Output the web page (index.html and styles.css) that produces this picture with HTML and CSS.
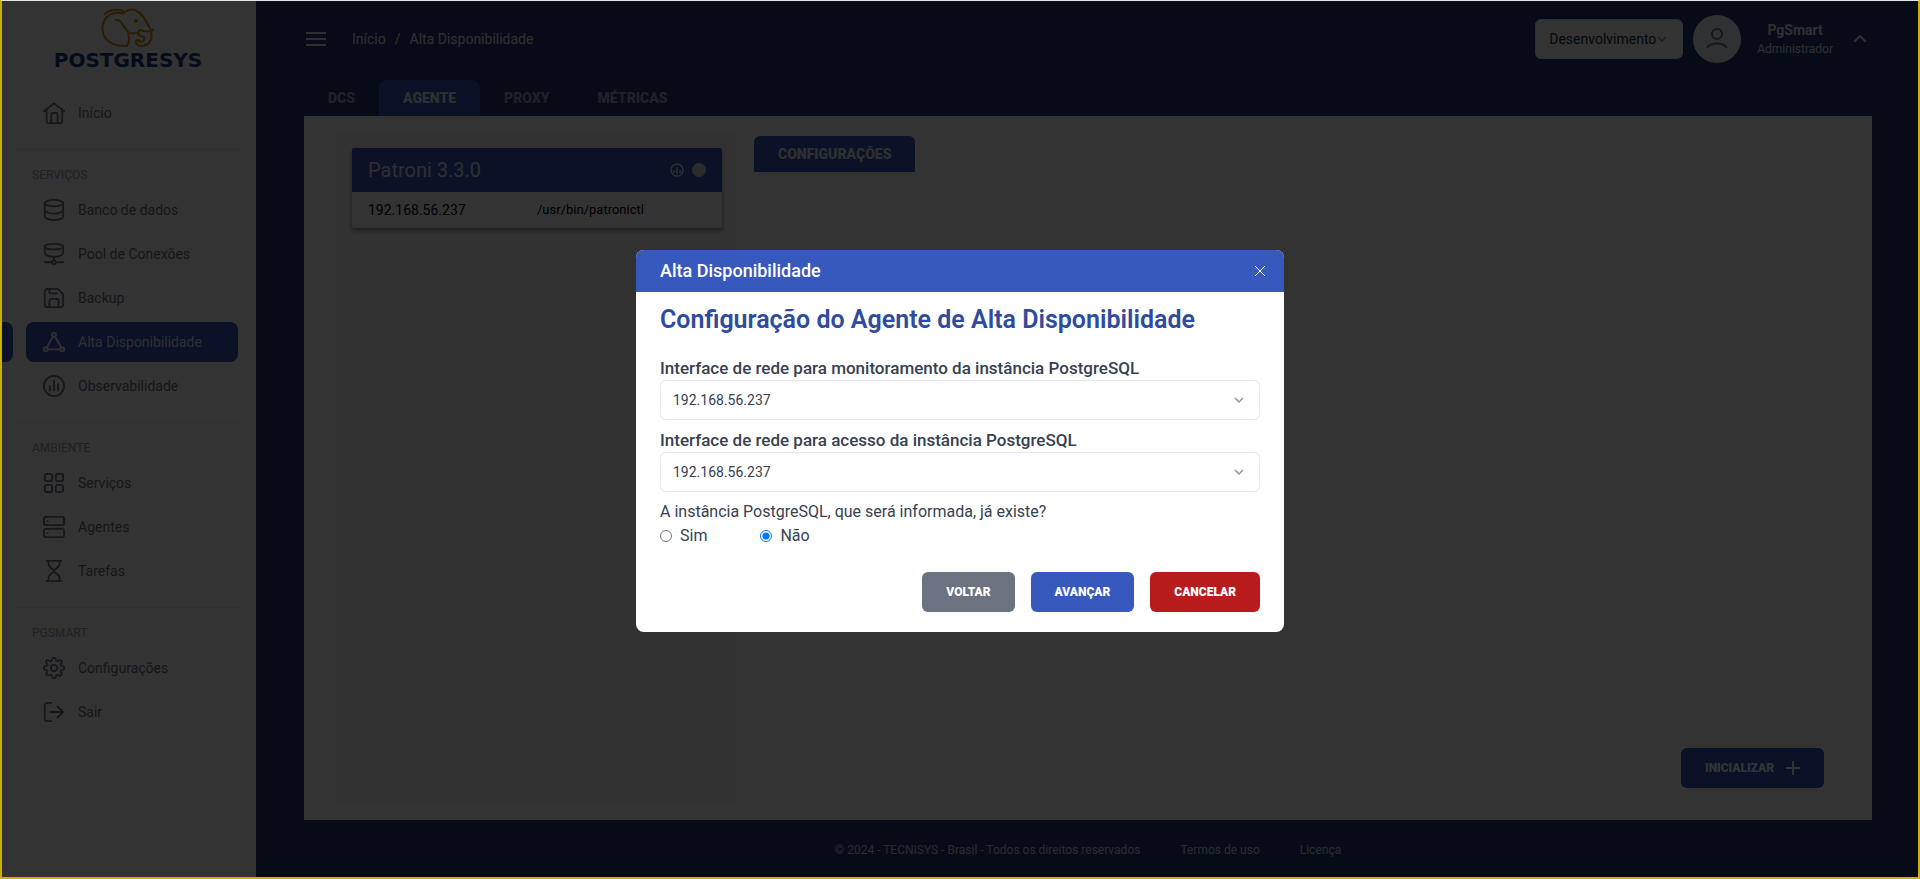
FILE: index.html
```html
<!DOCTYPE html>
<html lang="pt-BR">
<head>
    <meta charset="UTF-8">
    <meta name="viewport" content="width=device-width, initial-scale=1.0">
    <title>PgSmart - Alta Disponibilidade</title>

    <link rel="stylesheet" href="styles.css">
</head>
<body>

    <aside class="sidebar">
        <a href="#" class="logo">
            <svg class="logo-mark" viewBox="0 0 54 40">
                <path d="M3 7C8 1 15 1 23 3M27 25C29 30 28 35 26 38C15 38 7 35 3 28C-1 18 3 7 14 5C18 4 20 6 23 5C28 0 34 1 37 4C42 6 45 14 49 20C52 28 51 37 41 38C37 38 34 36 35 33C36 31 38 32 39 34C42 34 44 32 43 29C42 27 38 30 37 25M14 12C21 11 20 16 24 20C26 23 27 24 28 25C33 26 37 25 39 22C44 24 50 24 53 21" />
                <circle cx="35" cy="13" r="1" />
            </svg>
            <span class="logo-text">POSTGRESYS</span>
        </a>

        <nav class="menu">
            <a href="#" class="menu-item">
                <svg viewBox="0 0 24 24"><path d="M1 10L12 1.500L23 10M4 8V21Q4 23 6 23H19Q21 23 21 21V8M9 23V14Q9 12 11 12H14Q16 12 16 14V23" /></svg>
                Início
            </a>

            <h2 class="menu-title">SERVIÇOS</h2>
            <a href="#" class="menu-item">
                <svg viewBox="0 0 24 24"><ellipse cx="12" cy="4.500" rx="10" ry="3.500" /><path d="M2 4.500V19C2 21 6 23 12 23S22 21 22 19V4.500M2 12C2 14 6 16 12 16S22 14 22 12" /></svg>
                Banco de dados
            </a>
            <a href="#" class="menu-item">
                <svg viewBox="0 0 24 24"><ellipse cx="12" cy="4" rx="10" ry="3" /><path d="M2 4V11C2 13 6 15 12 15S22 13 22 11V4M12 15V19M2 21H10M14 21H22" /><circle cx="12" cy="21" r="2" /></svg>
                Pool de Conexões
            </a>
            <a href="#" class="menu-item">
                <svg viewBox="0 0 24 24"><path d="M5 2H16L22 8V19Q22 22 19 22H5Q2 22 2 19V5Q2 2 5 2M7 2V6Q7 7 8 7H15M7 22V15Q7 13 9 13H15Q17 13 17 15V22" /></svg>
                Backup
            </a>
            <a href="#" class="menu-item active">
                <svg viewBox="0 0 24 24"><rect x="10" y="2" width="4" height="4" rx="1" /><rect x="1" y="18" width="4" height="4" rx="1" /><rect x="19" y="18" width="4" height="4" rx="1" /><path d="M11 6L4 18M13 6L20 18M5 20H19" /></svg>
                Alta Disponibilidade
            </a>
            <a href="#" class="menu-item">
                <svg viewBox="0 0 24 24"><circle cx="12" cy="12" r="11" /><path d="M7.500 12V17M12 6.500V17M16.500 10V17" /></svg>
                Observabilidade
            </a>

            <h2 class="menu-title">AMBIENTE</h2>
            <a href="#" class="menu-item">
                <svg viewBox="0 0 24 24"><rect x="2" y="2" width="8" height="8" rx="2" /><rect x="14" y="2" width="8" height="8" rx="2" /><rect x="2" y="14" width="8" height="8" rx="2" /><rect x="14" y="14" width="8" height="8" rx="2" /></svg>
                Serviços
            </a>
            <a href="#" class="menu-item">
                <svg viewBox="0 0 24 24"><rect x="1" y="1" width="22" height="9" rx="2" /><rect x="1" y="14" width="22" height="9" rx="2" /><path d="M5 5.500H5.100M5 18.500H5.100" /></svg>
                Agentes
            </a>
            <a href="#" class="menu-item">
                <svg viewBox="0 0 24 24"><path d="M4 1H20M4 23H20M6 1V5C6 8 12 10 12 12S6 16 6 19V23M18 1V5C18 8 12 10 12 12S18 16 18 19V23" /></svg>
                Tarefas
            </a>

            <h2 class="menu-title">PGSMART</h2>
            <a href="#" class="menu-item">
                <svg viewBox="0 0 24 24"><circle cx="12" cy="12" r="3.500" /><path d="M19.400 15a1.700 1.700 0 0 0 .3 1.800l.1.100a2 2 0 1 1-2.900 2.900l-.1-.1a1.700 1.700 0 0 0-2.800 1.200V21a2 2 0 0 1-4 0v-.1a1.700 1.700 0 0 0-2.900-1.200l-.1.100a2 2 0 1 1-2.800-2.900l.1-.1A1.700 1.700 0 0 0 3.100 14H3a2 2 0 0 1 0-4h.1a1.700 1.700 0 0 0 1.200-2.900L4.200 7A2 2 0 1 1 7 4.200l.1.100A1.700 1.700 0 0 0 10 3.100V3a2 2 0 0 1 4 0v.1a1.700 1.700 0 0 0 2.900 1.200l.1-.1A2 2 0 1 1 19.800 7l-.1.100A1.700 1.700 0 0 0 20.900 10H21a2 2 0 0 1 0 4h-.1a1.700 1.700 0 0 0-1.500 1z" /></svg>
                Configurações
            </a>
            <a href="#" class="menu-item">
                <svg viewBox="0 0 24 24"><path d="M9 2H5Q2 2 2 5V19Q2 22 5 22H9M8 12H22M16 6L22 12L16 18" /></svg>
                Sair
            </a>
        </nav>
    </aside>

    <div class="page">
        <header class="topbar">
            <button type="button" class="icon-button" aria-label="Menu">
                <svg class="burger" viewBox="0 0 20 14"><path d="M0 1H20M0 7H20M0 13H20" /></svg>
            </button>
            <nav class="breadcrumb">
                <a href="#">Início</a>
                <span>/</span>
                <a href="#">Alta Disponibilidade</a>
            </nav>
            <div class="env">
                <select class="env-select" aria-label="Ambiente">
                    <option>Desenvolvimento</option>
                </select>
                <svg class="chevron" viewBox="0 0 10 6"><path d="M1 1L5 5L9 1" /></svg>
            </div>
            <div class="avatar">
                <svg viewBox="0 0 22 22"><circle cx="11" cy="6" r="5" /><path d="M1 20C5 14 17 14 21 20" /></svg>
            </div>
            <div class="user">
                <strong>PgSmart</strong>
                <span>Administrador</span>
            </div>
            <button type="button" class="icon-button" aria-label="Abrir perfil">
                <svg class="caret" viewBox="0 0 14 8"><path d="M1 7L7 1L13 7" /></svg>
            </button>
        </header>

        <nav class="tabs">
            <a href="#" class="tab">DCS</a>
            <a href="#" class="tab active">AGENTE</a>
            <a href="#" class="tab">PROXY</a>
            <a href="#" class="tab">MÉTRICAS</a>
        </nav>

        <main class="content">
            <section class="agents">
                <article class="agent-card">
                    <header>
                        <h3>Patroni 3.3.0</h3>
                        <svg class="agent-icon" viewBox="0 0 14 14"><circle cx="7" cy="7" r="6" /><path d="M4 7V10M7 4V11M10 7V10" /></svg>
                        <span class="status"></span>
                    </header>
                    <div class="agent-info">
                        <span>192.168.56.237</span>
                        <span class="agent-path">/usr/bin/patronictl</span>
                    </div>
                </article>
            </section>
            <section class="details">
                <button type="button" class="config-tab">CONFIGURAÇÕES</button>
                <button type="button" class="btn btn-primary btn-start">
                    INICIALIZAR
                    <svg viewBox="0 0 14 14"><path d="M7 0V14M0 7H14" /></svg>
                </button>
            </section>
        </main>

        <footer class="footer">
            <span>© 2024 - TECNISYS - Brasil - Todos os direitos reservados</span>
            <a href="#">Termos de uso</a>
            <a href="#">Licença</a>
        </footer>
    </div>

    <div class="overlay">
        <div class="modal" role="dialog" aria-labelledby="modal-title">
            <header class="modal-header">
                <h2 id="modal-title">Alta Disponibilidade</h2>
                <button type="button" class="icon-button" aria-label="Fechar">
                    <svg class="close" viewBox="0 0 10 10"><path d="M0 0L10 10M10 0L0 10" /></svg>
                </button>
            </header>
            <form class="modal-body">
                <h1>Configuração do Agente de Alta Disponibilidade</h1>

                <div class="field">
                    <label for="monitor-ip">Interface de rede para monitoramento da instância PostgreSQL</label>
                    <div class="select-box">
                        <select id="monitor-ip">
                            <option>192.168.56.237</option>
                        </select>
                        <svg class="chevron" viewBox="0 0 10 6"><path d="M1 1L5 5L9 1" /></svg>
                    </div>
                </div>

                <div class="field">
                    <label for="access-ip">Interface de rede para acesso da instância PostgreSQL</label>
                    <div class="select-box">
                        <select id="access-ip">
                            <option>192.168.56.237</option>
                        </select>
                        <svg class="chevron" viewBox="0 0 10 6"><path d="M1 1L5 5L9 1" /></svg>
                    </div>
                </div>

                <fieldset class="radios">
                    <legend>A instância PostgreSQL, que será informada, já existe?</legend>
                    <div class="radio-row">
                        <label for="exists-yes"><input type="radio" id="exists-yes" name="exists">Sim</label>
                        <label for="exists-no"><input type="radio" id="exists-no" name="exists" checked>Não</label>
                    </div>
                </fieldset>

                <div class="actions">
                    <button type="button" class="btn btn-back">VOLTAR</button>
                    <button type="submit" class="btn btn-primary">AVANÇAR</button>
                    <button type="button" class="btn btn-cancel">CANCELAR</button>
                </div>
            </form>
        </div>
    </div>

</body>
</html>
```
FILE: styles.css
```css
* {
    box-sizing: border-box;
    margin: 0;
    padding: 0;
}

body {
    font-family: Roboto, "Liberation Sans", sans-serif;
    font-size: 14px;
    line-height: 20px;
    color: #1e293b;
    background-color: #233876;
    display: flex;
    min-height: 100vh;
}

a {
    color: inherit;
    text-decoration: none;
}

button {
    font-family: inherit;
    cursor: pointer;
}

svg {
    fill: none;
    stroke: currentColor;
    stroke-width: 2;
    flex-shrink: 0;
}

/* Sidebar */
.sidebar {
    width: 256px;
    background-color: #fff;
    padding: 8px 16px;
    flex-shrink: 0;
}

.logo {
    display: flex;
    flex-direction: column;
    align-items: center;
    gap: 2px;
    height: 85px;
}

.logo-mark {
    width: 54px;
    height: 40px;
    color: #d98a10;
}

.logo-text {
    font-family: "DejaVu Sans", sans-serif;
    font-size: 20px;
    font-weight: bold;
    color: #1e3a8a;
}

.menu {
    display: flex;
    flex-direction: column;
    gap: 4px;
}

.menu-item {
    display: flex;
    align-items: center;
    gap: 13px;
    height: 40px;
    margin: 0 2px 0 10px;
    padding-left: 17px;
    border-radius: 8px;
    color: #6b7280;
}

.menu-item svg {
    width: 22px;
    height: 22px;
    stroke-linecap: round;
    stroke-linejoin: round;
}

.menu-item.active {
    background-color: #3758bc;
    color: #e2e8f0;
    position: relative;
}

/* Blue marker on the window edge */
.menu-item.active::before {
    content: "";
    position: absolute;
    left: -26px;
    width: 13px;
    height: 40px;
    background-color: #3758bc;
    border-radius: 0 8px 8px 0;
}

.menu-title {
    height: 37px;
    margin-top: 12px;
    padding: 15px 16px 0;
    border-top: 1px solid #e2e8f0;
    font-size: 12px;
    font-weight: 400;
    color: #94a3b8;
}

/* Page */
.page {
    flex: 1;
    display: flex;
    flex-direction: column;
    padding: 0 48px;
    color: #e2e8f0;
}

.topbar {
    display: flex;
    align-items: center;
    height: 80px;
    padding: 0 5px 2px 2px;
}

.icon-button {
    display: flex;
    background: none;
    border: none;
    color: inherit;
}

.burger {
    width: 20px;
    height: 14px;
}

.breadcrumb {
    display: flex;
    gap: 9px;
    margin: 0 auto 0 26px;
}

.env {
    display: flex;
    align-items: center;
    position: relative;
}

.env-select {
    width: 148px;
    height: 40px;
    padding: 0 13px;
    appearance: none;
    font: inherit;
    color: #1e293b;
    background-color: #fff;
    border: 1px solid #e2e8f0;
    border-radius: 6px;
}

.chevron {
    position: absolute;
    right: 16px;
    width: 10px;
    height: 6px;
    color: #9096a0;
    stroke-width: 1.5;
    pointer-events: none;
}

.avatar {
    display: flex;
    align-items: center;
    justify-content: center;
    width: 48px;
    height: 48px;
    margin: 0 16px 0 10px;
    border-radius: 50%;
    background-color: #f1f5f9;
    color: #64748b;
}

.avatar svg {
    width: 22px;
    height: 22px;
}

.user {
    text-align: center;
    margin-right: 20px;
    line-height: 18px;
}

.user strong {
    display: block;
    font-weight: 700;
}

.user span {
    font-size: 12px;
}

.caret {
    width: 14px;
    height: 8px;
}

.tabs {
    display: flex;
}

.tab {
    padding: 8px 24px;
    border-radius: 8px 8px 0 0;
    font-weight: 900;
    color: #94a3b8;
}

.tab.active {
    background-color: #3758bc;
    color: #e2e8f0;
}

.content {
    flex: 1;
    display: flex;
    gap: 16px;
    padding: 16px 32px;
    background-color: #fff;
    color: #1e293b;
}

.agents {
    width: 402px;
    padding: 16px;
    background-color: #fafafa;
}

.agent-card {
    background-color: #fff;
    border-radius: 2px;
    overflow: hidden;
    box-shadow: 0 3px 5px rgba(0, 0, 0, 0.4);
}

.agent-card header {
    display: flex;
    align-items: center;
    gap: 8px;
    height: 44px;
    padding: 0 16px;
    background-color: #3758bc;
    color: #e2e8f0;
}

.agent-card h3 {
    margin-right: auto;
    font-size: 20px;
    font-weight: 400;
}

.agent-icon {
    width: 14px;
    height: 14px;
    stroke-width: 1.5;
}

.status {
    width: 14px;
    height: 14px;
    border-radius: 50%;
    background-color: #cbd5e1;
}

.agent-info {
    display: grid;
    grid-template-columns: 1fr 1fr;
    padding: 8px 16px;
    color: #000;
}

.agent-path {
    font-size: 13px;
}

.details {
    flex: 1;
    display: flex;
    flex-direction: column;
    align-items: flex-start;
    justify-content: space-between;
    padding: 4px 16px 16px 0;
    background-color: #fcfcfc;
}

.config-tab {
    height: 36px;
    padding: 0 24px;
    border: none;
    border-radius: 6px 6px 0 0;
    background-color: #3758bc;
    color: #e2e8f0;
    font-size: 14px;
    font-weight: 900;
}

.btn {
    height: 40px;
    padding: 0 24px;
    border: none;
    border-radius: 6px;
    color: #fff;
    font-size: 12px;
    font-weight: 900;
}

.btn-primary {
    background-color: #3758bc;
}

.btn-back {
    background-color: #6b7280;
}

.btn-cancel {
    background-color: #b91c1c;
}

.btn-start {
    display: flex;
    align-items: center;
    gap: 12px;
    align-self: flex-end;
}

.btn-start svg {
    width: 14px;
    height: 14px;
}

.footer {
    display: flex;
    align-items: center;
    justify-content: center;
    gap: 40px;
    height: 59px;
    font-size: 12px;
    color: #cbd5e1;
}

/* Modal */
.overlay {
    position: fixed;
    inset: 0;
    display: flex;
    align-items: center;
    justify-content: center;
    padding-top: 4px;
    background-color: rgba(0, 0, 0, 0.8);
    border: 2px solid #cdb000;
    border-top: 1px solid #dfe7e3;
}

.modal {
    width: 648px;
    border-radius: 8px;
    overflow: hidden;
    background-color: #fff;
    color: #374151;
}

.modal-header {
    display: flex;
    align-items: center;
    justify-content: space-between;
    height: 42px;
    padding: 0 19px 0 24px;
    background-color: #3758bc;
    color: #fff;
}

.modal-header h2 {
    font-size: 18px;
    font-weight: 500;
}

.close {
    width: 10px;
    height: 10px;
    stroke-width: 1;
}

.modal-body {
    padding: 12px 24px 20px;
    font-size: 16px;
}

.modal-body h1 {
    margin-bottom: 20px;
    font-size: 25px;
    line-height: 32px;
    font-weight: 600;
    color: #2f4ba0;
}

.field {
    margin-bottom: 8px;
}

.field label {
    display: block;
    font-size: 17px;
    line-height: 24px;
    font-weight: 500;
}

.select-box {
    display: flex;
    align-items: center;
    position: relative;
}

.select-box select {
    width: 100%;
    height: 40px;
    padding: 0 12px;
    appearance: none;
    font: inherit;
    font-size: 14px;
    color: #374151;
    background-color: #fff;
    border: 1px solid #e2e8f0;
    border-radius: 6px;
}

.radios {
    border: none;
}

.radios legend,
.radio-row {
    line-height: 24px;
}

.radio-row {
    display: flex;
    gap: 53px;
}

.radio-row label {
    display: flex;
    align-items: center;
    gap: 8px;
}

.radio-row input {
    width: 12px;
    height: 12px;
}

.actions {
    display: flex;
    justify-content: flex-end;
    gap: 16px;
    margin-top: 24px;
}
```
